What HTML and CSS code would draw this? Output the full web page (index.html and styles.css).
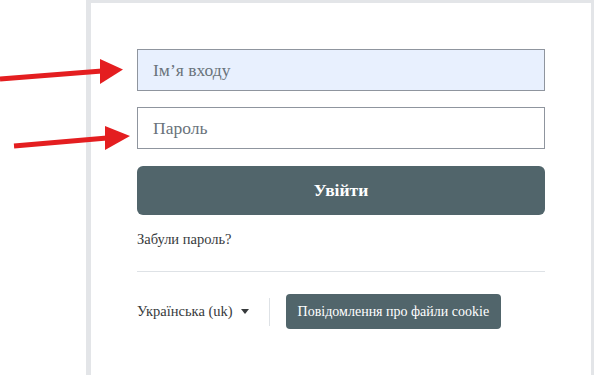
FILE: index.html
```html
<!DOCTYPE html>
<html lang="uk">
<head>
  <meta charset="UTF-8">
  <meta name="viewport" content="width=device-width, initial-scale=1.0">
  <title>Вхід</title>

  <link rel="stylesheet" href="styles.css">
</head>

<body>

<div class="page">
  <div class="login-card">
    <form class="login-form">
      <input type="text" class="field field-filled" placeholder="Ім’я входу">
      <input type="password" class="field" placeholder="Пароль">
      <button type="button" class="login-button">Увійти</button>
    </form>

    <a class="forgot-link" href="#">Забули пароль?</a>

    <div class="divider"></div>

    <div class="login-footer">
      <div class="lang-menu">
        <span>Українська (uk)</span>
        <span class="caret"></span>
      </div>
      <div class="footer-sep"></div>
      <button type="button" class="cookie-button">Повідомлення про файли cookie</button>
    </div>
  </div>
</div>

<!-- red pointer arrows over the form -->
<svg class="arrows" width="140" height="160" viewBox="0 0 140 160">
  <line x1="0" y1="79" x2="102" y2="71" stroke="#e41e20" stroke-width="5"/>
  <polygon points="100,59 123,69.5 100,84" fill="#e41e20"/>
  <line x1="14" y1="146" x2="107" y2="138" stroke="#e41e20" stroke-width="5"/>
  <polygon points="105,126 130,136 105,150" fill="#e41e20"/>
</svg>

</body>
</html>
```

FILE: styles.css
```css
body {
  margin: 0;
  background-color: #fff;
  font-family: "Liberation Serif", serif;
  color: #373a3c;
}

.page {
  margin-left: 86px;
  padding: 3px 3px 0 5px;
  background-color: #e3e5e8;
  height: 372px;
}

.login-card {
  background-color: #fff;
  height: 100%;
  padding: 46px 46px 0 46px;
  box-sizing: border-box;
}

.login-form {
  display: flex;
  flex-direction: column;
}

.field {
  height: 42px;
  box-sizing: border-box;
  padding: 0 15px;
  font-family: "Liberation Serif", serif;
  font-size: 17.5px;
  border: 1px solid #8f959e;
  border-radius: 0;
  margin: 0 0 16px 0;
  background-color: #fff;
  outline: none;
}

.field::placeholder {
  color: #6a737b;
}

.field-filled {
  background-color: #e8f0fe;
}

.login-button {
  margin-top: 1px;
  height: 49px;
  border: none;
  border-radius: 6px;
  background-color: #51656b;
  color: #fff;
  font-family: "Liberation Serif", serif;
  font-size: 17.5px;
  font-weight: bold;
  cursor: pointer;
}

.forgot-link {
  display: block;
  margin-top: 13px;
  font-size: 14.5px;
  line-height: 22px;
  color: #373a3c;
  text-decoration: none;
}

.divider {
  margin-top: 21px;
  border-top: 1px solid #dee2e6;
}

.login-footer {
  display: flex;
  align-items: center;
  margin-top: 22px;
  font-size: 14.5px;
}

.lang-menu {
  display: flex;
  align-items: center;
  gap: 8px;
  color: #373a3c;
}

.caret {
  width: 0;
  height: 0;
  border-left: 4.5px solid transparent;
  border-right: 4.5px solid transparent;
  border-top: 5px solid #373a3c;
}

.footer-sep {
  width: 1px;
  height: 28px;
  background-color: #dee2e6;
  margin: 0 16px 0 20px;
}

.cookie-button {
  height: 35px;
  padding: 0 12px;
  border: none;
  border-radius: 4px;
  background-color: #51656b;
  color: #fff;
  font-family: "Liberation Serif", serif;
  font-size: 14px;
  cursor: pointer;
}

.arrows {
  position: absolute;
  left: 0;
  top: 0;
}
```
